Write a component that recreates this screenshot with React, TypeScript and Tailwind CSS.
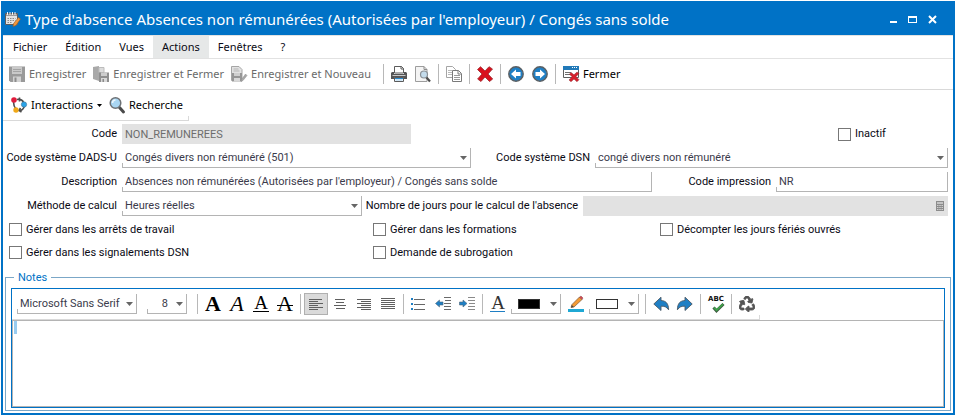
import { ReactNode, useState } from "react";
import { FaRecycle } from "react-icons/fa";
import clsx from "clsx";

type IconProps = { children: ReactNode };

function Icon({ children }: IconProps) {
  return (
    <svg width="16" height="16" viewBox="0 0 16 16" fill="none" className="shrink-0 overflow-visible" aria-hidden="true">
      {children}
    </svg>
  );
}

// ---- icons ----

const CalendarIcon = () => (
  <Icon>
    <path d="M.5 2.500h12v11H.5z" fill="#e4e4e4" stroke="#5c5c5c" />
    <path d="M1 3h11v2H1z" fill="#9b9b9b" />
    <path d="M2.500 1v3M5 1v3M7.500 1v3M10 1v3" stroke="#f5f5f5" />
    <path d="M2.500 7.500h8M2.500 9.500h8M2.500 11.500h5" stroke="#8a8a8a" strokeDasharray="1.500 1" />
    <path d="M13.500 6.500l2 1.500-4.500 6.500-3 1 .6-3z" fill="#f0963c" stroke="#8a5a30" strokeWidth=".6" />
  </Icon>
);

const SaveIcon = () => (
  <Icon>
    <path d="M0 .5h16V16H1.500L0 14.500z" fill="#9a9a9a" />
    <path d="M3 .5h10V8H3z" fill="#c9c9c9" />
    <path d="M4 3.500h8M4 5.500h8" stroke="#a4a4a4" />
    <path d="M4 10.500h8V16H4z" fill="#d2d2d2" />
    <path d="M5.500 11.500h2V16h-2z" fill="#8c8c8c" />
  </Icon>
);

const SaveCloseIcon = () => (
  <Icon>
    <path d="M0 1l6-1v15l-6-2z" fill="#a9a9a9" />
    <path d="M6 1.500h5v5H6z" fill="#dcdcdc" stroke="#bcbcbc" />
    <path d="M6 6.500h10V16H6z" fill="#8f8f8f" />
    <path d="M8 6.500h6v3.500H8z" fill="#cdcdcd" />
    <path d="M8 12h6v4H8z" fill="#d8d8d8" />
    <path d="M9.500 13h1.500v3H9.500z" fill="#8a8a8a" />
  </Icon>
);

const SaveNewIcon = () => (
  <Icon>
    <path d="M.5.5h7.500l3 3v11H.5z" fill="#e2e2e2" stroke="#a6a6a6" />
    <path d="M2.500 3h5M2.500 5h6" stroke="#b5b5b5" />
    <path d="M1 7h10v8.500H1z" fill="#969696" />
    <path d="M3 7h6v3H3z" fill="#cfcfcf" />
    <path d="M3 12h6v3.500H3z" fill="#d9d9d9" />
    <path d="M14.500 8l1.500 1.500-4 5-2 1 .5-2z" fill="#a8a8a8" stroke="#8e8e8e" strokeWidth=".5" />
  </Icon>
);

const PrintIcon = () => (
  <Icon>
    <path d="M3.500.5h7l2 2V7h-9z" fill="#fff" stroke="#5b5b5b" />
    <path d="M10 0v3h3" stroke="#5b5b5b" />
    <path d="M1 6h2v2h10V6h2l1 1v6H0V7z" fill="#555" />
    <path d="M1.500 9.500h13" stroke="#c8c8c8" />
    <path d="M3.500 11.500h9v4h-9z" fill="#fff" stroke="#5b5b5b" />
    <path d="M4 12.500h8" stroke="#2a8ccf" />
    <path d="M4.500 14h7" stroke="#9fcbea" />
  </Icon>
);

const PreviewIcon = () => (
  <Icon>
    <path d="M.5.5h8.500l3 3v12H.5z" fill="#f4f4f4" stroke="#9d9d9d" />
    <path d="M9 .5v3h3" stroke="#8d8d8d" />
    <circle cx="9" cy="8.500" r="3.500" fill="#c4dcec" stroke="#8a9096" strokeWidth="1.200" />
    <path d="M11.500 11.500l3.500 4" stroke="#4e4e4e" strokeWidth="2.200" />
  </Icon>
);

const CopyIcon = () => (
  <Icon>
    <path d="M.5.5h6l3 3v8h-9z" fill="#fff" stroke="#a5a5a5" />
    <path d="M2 4.500h4M2 6.500h4M2 8.500h4" stroke="#b9b9b9" />
    <path d="M6.500 4.500h6l3 3v8h-9z" fill="#fff" stroke="#7a7a7a" />
    <path d="M12 4.500v3.500h3" stroke="#7a7a7a" />
    <path d="M8 9.500h6M8 11.500h6M8 13.500h6" stroke="#9a9a9a" />
  </Icon>
);

const DeleteIcon = () => (
  <Icon>
    <path
      d="M3.500.7L8 5l4-4.300L15.500 3 11 8l4.700 5-3.200 2.500L8 11l-4 4.500L.6 13 5 8 .5 3.500z"
      fill="#d9101c"
      stroke="#9d2a2e"
      strokeWidth=".8"
    />
  </Icon>
);

const PrevIcon = () => (
  <Icon>
    <circle cx="8" cy="8" r="7.200" fill="#1f7fc4" stroke="#5a5f63" strokeWidth="1.400" />
    <path d="M3 8l5-4.500V6h4.500v4H8v2.500z" fill="#fff" />
  </Icon>
);

const NextIcon = () => (
  <Icon>
    <circle cx="8" cy="8" r="7.200" fill="#1f7fc4" stroke="#5a5f63" strokeWidth="1.400" />
    <path d="M13 8L8 3.500V6H3.500v4H8v2.500z" fill="#fff" />
  </Icon>
);

const CloseWindowIcon = () => (
  <Icon>
    <path d="M.5 1v10.500h15V1z" fill="#fff" stroke="#5f5f5f" />
    <path d="M0 0h16v4H0z" fill="#2179b8" />
    <path d="M9 1.500h1M11 1.500h1M13 1.500h1" stroke="#fff" />
    <path d="M2 6.500h6M2 8.500h5" stroke="#6f6f6f" />
    <path
      d="M8 6.500l3 2.300 3-2.800 2 1.500-3 3.200 3 3-2 2-3-2.700-3 2.700-2-1.700 3-3.300-2.500-2.500z"
      fill="#d6202c"
      stroke="#8f2a2e"
      strokeWidth=".5"
    />
  </Icon>
);

const InteractionsIcon = () => (
  <Icon>
    <path d="M2.500 5c0 3 .8 5 2.500 7" stroke="#4d4d4d" strokeWidth="1.600" />
    <path d="M6 2.500c3-.5 5 0 6.500 2.500M8.500.5v4M13.500 9c-1 3-3 4.500-5 4.800M10.500 15l-2.500-1.500L9.500 11" stroke="#4d4d4d" strokeWidth="1.600" />
    <circle cx="3" cy="3" r="2.800" fill="#e01b3c" />
    <circle cx="13" cy="7.500" r="2.700" fill="#2aa3e8" stroke="#4a6b80" strokeWidth=".5" />
    <circle cx="5" cy="13" r="2.700" fill="#f0a818" />
  </Icon>
);

const SearchIcon = () => (
  <Icon>
    <path d="M10.500 10.500l4 4.500" stroke="#4a4a4a" strokeWidth="3" strokeLinecap="round" />
    <circle cx="6.500" cy="6" r="5.300" fill="#a9d6f3" stroke="#6e7276" strokeWidth="1.500" />
    <path d="M3.500 6a3 3 0 013-3" stroke="#eef8ff" strokeWidth="1.500" />
  </Icon>
);

const CalculatorIcon = () => (
  <svg width="8" height="10" viewBox="0 0 8 10" aria-hidden="true">
    <path d="M0 0h8v10H0z" fill="#8c8c8c" />
    <path d="M1 1h6v2H1z" fill="#c4c4c4" />
    <path d="M1 4.500h6M1 6.500h6M1 8.500h6" stroke="#d0d0d0" strokeDasharray="1.500 .75" />
  </svg>
);

const BulletsIcon = () => (
  <Icon>
    <path d="M0 2h2v2H0zM0 7h2v2H0zM0 12h2v2H0z" fill="#1f7fc4" />
    <path d="M3 3.500h11M3 8.500h11M3 13.500h11" stroke="#666" />
  </Icon>
);

const OutdentIcon = () => (
  <Icon>
    <path d="M9 1.500h7M10 4.500h6M9 7.500h7M9 10.500h7M9 13.500h7" stroke="#6a6a6a" />
    <path d="M.5 7.500l4-3.500v2H8v3H4.500v2z" fill="#1f7fc4" stroke="#4f6678" strokeWidth=".6" />
  </Icon>
);

const IndentIcon = () => (
  <Icon>
    <path d="M9 1.500h7M9 4.500h7M10 7.500h6M9 10.500h7M9 13.500h7" stroke="#8a8a8a" />
    <path d="M8 7.500L4 4v2H.5v3H4v2z" fill="#1f7fc4" stroke="#4f6678" strokeWidth=".6" />
  </Icon>
);

const PencilIcon = () => (
  <Icon>
    <path d="M3 11.500l1-3L11.500 1 14 3.500 6 11z" fill="#f39a35" stroke="#7d5a3a" strokeWidth=".7" />
    <path d="M11.500 1l1.500-1 2 2-1 1.500z" fill="#e0404a" stroke="#7a5055" strokeWidth=".5" />
    <path d="M3 11.500l.8-2.500 2 2z" fill="#444" />
    <path d="M0 13h16v3H0z" fill="#1fa8d4" />
  </Icon>
);

const UndoIcon = () => (
  <Icon>
    <path
      d="M.8 8L8 1.200v3.300c4.800.2 7.600 3 7.600 9.300-2-3-4.300-3.800-7.600-3.600v4.300z"
      fill="#1f7fc4"
      stroke="#4d5a66"
      strokeWidth=".9"
    />
  </Icon>
);

const RedoIcon = () => (
  <Icon>
    <path
      d="M15.200 8L8 1.200v3.300C3.200 4.700.4 7.500.4 13.800c2-3 4.300-3.800 7.600-3.600v4.300z"
      fill="#1f7fc4"
      stroke="#4d5a66"
      strokeWidth=".9"
    />
  </Icon>
);

const SpellIcon = () => (
  <Icon>
    <text x="0" y="5" className="font-['DejaVu_Sans',sans-serif] text-[7px] font-bold" fill="#111">
      ABC
    </text>
    <path d="M5.500 11.500l3 3.300L15.500 8" stroke="#3d5a40" strokeWidth="3" />
    <path d="M6 11.500l2.500 2.700L15 8.200" stroke="#3fa34a" strokeWidth="1.800" />
  </Icon>
);

const ALIGN_LINES = {
  left: "M1 3.500h13M1 5.500h9M1 7.500h14M1 9.500h9M1 11.500h14M1 13.500h9",
  center: "M3 3.500h10M4 6.500h8M2 9.500h12M4 12.500h9",
  right: "M1 3.500h14M5 5.500h10M1 7.500h14M5 9.500h10M1 11.500h14M5 13.500h10",
  justify: "M1 2.500h14M1 4.500h14M1 6.500h14M1 8.500h14M1 10.500h14M1 12.500h14",
};

type Align = keyof typeof ALIGN_LINES;

const AlignIcon = ({ align }: { align: Align }) => (
  <Icon>
    <path d={ALIGN_LINES[align]} stroke="#5f5f5f" />
  </Icon>
);

type LetterStyle = "bold" | "italic" | "underline" | "strike" | "color";

const LetterIcon = ({ kind }: { kind: LetterStyle }) => (
  <Icon>
    <text
      x="8"
      y={kind === "underline" || kind === "color" ? 13 : 15}
      textAnchor="middle"
      fill={kind === "color" ? "#333" : "#000"}
      className={clsx(
        "font-['Liberation_Serif',serif]",
        kind === "underline" || kind === "color" ? "text-[19px]" : "text-[22px]",
        kind === "bold" && "font-bold",
        kind === "italic" && "italic"
      )}
    >
      A
    </text>
    {kind === "underline" && <path d="M0 15.500h16" stroke="#000" />}
    {kind === "color" && <path d="M0 15.500h15" stroke="#1f7fc4" />}
    {kind === "strike" && <path d="M0 9.500h16" stroke="#000" />}
  </Icon>
);

// ---- controls ----

type ToolButtonProps = {
  icon?: ReactNode;
  label?: string;
  title?: string;
  disabled?: boolean;
  active?: boolean;
  dropdown?: boolean;
  onClick?: () => void;
};

function ToolButton({ icon, label, title, disabled, active, dropdown, onClick }: ToolButtonProps) {
  return (
    <button
      type="button"
      disabled={disabled}
      aria-label={label ? undefined : title}
      onClick={onClick}
      className={clsx(
        "flex h-[22px] shrink-0 items-center gap-1 whitespace-nowrap font-['Noto_Sans',sans-serif] text-[11px]",
        active ? "border border-[#b0b0b0] bg-[#dadada] px-[3px]" : label ? "pr-[3px] pl-1" : "px-1",
        disabled ? "text-[#6a6a6a]" : "text-black"
      )}
    >
      {icon}
      {label}
      {dropdown && (
        <svg width="5" height="3" viewBox="0 0 5 3" className="shrink-0" aria-hidden="true">
          <path d="M0 0h5L2.500 3z" fill="#000" />
        </svg>
      )}
    </button>
  );
}

const Caret = () => (
  <svg
    width="7"
    height="4"
    viewBox="0 0 7 4"
    className="pointer-events-none absolute right-[3px] shrink-0"
    aria-hidden="true"
  >
    <path d="M0 0h7L3.500 4z" fill="#666" />
  </svg>
);

const Separator = () => <span className="mx-[3px] h-5 w-px shrink-0 bg-[#b8b8b8]" />;

const FIELD_BOX =
  "relative flex h-5 min-w-0 items-center border-r border-b border-[#b4b4b4] before:absolute before:bottom-0 before:left-0 before:h-1 before:w-px before:bg-[#b4b4b4]";

type SelectProps = {
  id: string;
  options: string[];
  title?: string;
  className?: string;
  right?: boolean;
};

function SelectBox({ id, options, title, className, right }: SelectProps) {
  return (
    <div className={clsx(FIELD_BOX, className)}>
      <select
        id={id}
        aria-label={title}
        className={clsx(
          "h-full w-full appearance-none bg-transparent pl-[3px] text-[#3b3b4b] outline-none",
          right ? "pr-[18px] text-right" : "pr-3"
        )}
      >
        {options.map((o) => (
          <option key={o}>{o}</option>
        ))}
      </select>
      <Caret />
    </div>
  );
}

function TextBox({ id, value }: { id: string; value: string }) {
  return (
    <div className={FIELD_BOX}>
      <input id={id} defaultValue={value} className="h-full w-full px-[3px] text-[#3b3b4b] outline-none" />
    </div>
  );
}

function FieldLabel({ htmlFor, children }: { htmlFor: string; children: ReactNode }) {
  return (
    <label htmlFor={htmlFor} className="flex justify-end whitespace-nowrap">
      {children}
    </label>
  );
}

function CheckField({ label }: { label: string }) {
  return (
    <label className="flex items-center gap-1 whitespace-nowrap">
      <input
        type="checkbox"
        className="size-[13px] shrink-0 appearance-none border border-[#777] bg-white checked:bg-[#0072c6]"
      />
      {label}
    </label>
  );
}

function ColorPicker({ title, swatch }: { title: string; swatch: string }) {
  return (
    <button
      type="button"
      aria-label={title}
      aria-haspopup="true"
      className={clsx(FIELD_BOX, "ml-px w-[50px] shrink-0 pl-[7px]")}
    >
      <span className={clsx("h-[10px] w-[22px] border border-[#333]", swatch)} />
      <Caret />
    </button>
  );
}

// ---- sections ----

const MENUS = ["Fichier", "Édition", "Vues", "Actions", "Fenêtres", "?"];

function TitleBar() {
  return (
    <header className="flex h-8 items-center justify-between bg-[#0072c6] pr-4 pl-0.5 text-white">
      <div className="flex items-center gap-1">
        <CalendarIcon />
        <h1 className="font-['Noto_Sans',sans-serif] text-[15px] whitespace-nowrap">
          Type d'absence Absences non rémunérées (Autorisées par l'employeur) / Congés sans solde
        </h1>
      </div>
      <div className="flex items-center gap-[11px]">
        <button type="button" aria-label="Réduire">
          <svg width="7" height="9" viewBox="0 0 7 9">
            <path d="M0 6h7v2H0z" fill="#fff" />
          </svg>
        </button>
        <button type="button" aria-label="Agrandir">
          <svg width="9" height="9" viewBox="0 0 9 9">
            <path d="M0 1h9v7H0zM1 3v4h7V3z" fill="#fff" fillRule="evenodd" />
          </svg>
        </button>
        <button type="button" aria-label="Fermer la fenêtre">
          <svg width="9" height="9" viewBox="0 0 9 9">
            <path d="M1 1l7 7M8 1L1 8" stroke="#fff" strokeWidth="2" />
          </svg>
        </button>
      </div>
    </header>
  );
}

function MenuBar() {
  return (
    <nav className="flex h-6 border-t border-b border-[#e2e2e2] px-px">
      {MENUS.map((m) => (
        <button
          key={m}
          type="button"
          className={clsx("px-[9px] font-['Noto_Sans',sans-serif] text-[11px]", m === "Actions" && "bg-[#e6e8e8]")}
        >
          {m}
        </button>
      ))}
    </nav>
  );
}

function MainToolbar() {
  return (
    <div className="flex h-[31px] items-center border-b border-[#d9d9d9] px-0.5">
      <ToolButton icon={<SaveIcon />} label="Enregistrer" disabled />
      <ToolButton icon={<SaveCloseIcon />} label="Enregistrer et Fermer" disabled />
      <ToolButton icon={<SaveNewIcon />} label="Enregistrer et Nouveau" disabled />
      <span className="w-1.5" />
      <Separator />
      <ToolButton icon={<PrintIcon />} title="Imprimer" />
      <ToolButton icon={<PreviewIcon />} title="Aperçu" />
      <Separator />
      <ToolButton icon={<CopyIcon />} title="Copier" />
      <Separator />
      <ToolButton icon={<DeleteIcon />} title="Supprimer" />
      <Separator />
      <ToolButton icon={<PrevIcon />} title="Précédent" />
      <ToolButton icon={<NextIcon />} title="Suivant" />
      <Separator />
      <ToolButton icon={<CloseWindowIcon />} label="Fermer" />
    </div>
  );
}

function SearchToolbar() {
  return (
    <div className="relative flex h-[31px] w-fit items-center border-b border-[#d9d9d9] pr-[3px] pl-1 after:absolute after:right-0 after:bottom-0 after:h-1 after:w-px after:bg-[#d9d9d9]">
      <ToolButton icon={<InteractionsIcon />} label="Interactions" dropdown />
      <ToolButton icon={<SearchIcon />} label="Recherche" />
    </div>
  );
}

function AbsenceForm() {
  return (
    <form className="flex flex-col gap-1 pt-[3px] pr-[5px]">
      <div className="grid h-5 grid-cols-[114px_289fr_417fr_110px] items-center gap-[5px]">
        <FieldLabel htmlFor="code">Code</FieldLabel>
        <input
          id="code"
          disabled
          defaultValue="NON_REMUNEREES"
          className="h-5 w-full min-w-0 bg-[#e2e2e2] px-[3px] text-[#6d6d6d]"
        />
        <span />
        <CheckField label="Inactif" />
      </div>
      <div className="grid grid-cols-[114px_349fr_114px_353fr] items-center gap-[5px]">
        <FieldLabel htmlFor="dads">Code système DADS-U</FieldLabel>
        <SelectBox id="dads" options={["Congés divers non rémunéré (501)"]} />
        <FieldLabel htmlFor="dsn">Code système DSN</FieldLabel>
        <SelectBox id="dsn" options={["congé divers non rémunéré"]} />
      </div>
      <div className="grid grid-cols-[114px_530fr_114px_172fr] items-center gap-[5px]">
        <FieldLabel htmlFor="description">Description</FieldLabel>
        <TextBox id="description" value="Absences non rémunérées (Autorisées par l'employeur) / Congés sans solde" />
        <FieldLabel htmlFor="impression">Code impression</FieldLabel>
        <TextBox id="impression" value="NR" />
      </div>
      <div className="grid grid-cols-[114px_240fr_211px_365fr] items-center gap-[5px]">
        <FieldLabel htmlFor="methode">Méthode de calcul</FieldLabel>
        <SelectBox id="methode" options={["Heures réelles"]} />
        <FieldLabel htmlFor="jours">Nombre de jours pour le calcul de l'absence</FieldLabel>
        <div className="flex h-5 min-w-0 items-center bg-[#e2e2e2] pr-1">
          <input id="jours" disabled className="h-full min-w-0 flex-1 px-[3px]" />
          <CalculatorIcon />
        </div>
      </div>
      <div className="grid auto-rows-[19px] grid-cols-[364fr_287fr_288fr] gap-y-1 pl-1.5">
        <CheckField label="Gérer dans les arrêts de travail" />
        <CheckField label="Gérer dans les formations" />
        <CheckField label="Décompter les jours fériés ouvrés" />
        <CheckField label="Gérer dans les signalements DSN" />
        <CheckField label="Demande de subrogation" />
      </div>
    </form>
  );
}

const ALIGNS: { value: Align; title: string }[] = [
  { value: "left", title: "Aligner à gauche" },
  { value: "center", title: "Centrer" },
  { value: "right", title: "Aligner à droite" },
  { value: "justify", title: "Justifier" },
];

function NotesEditor() {
  const [align, setAlign] = useState<Align>("left");

  return (
    <fieldset className="mx-0.5 mt-2 mb-0.5 flex min-w-0 flex-1 flex-col border border-[#7ba7c7] px-[5px] pt-[3px] pb-0.5">
      <legend className="ml-[3px] h-[15px] px-1 leading-[15px] text-[#0072c6]">Notes</legend>
      <div className="flex flex-1 flex-col border border-[#0072c6]">
        <div className="relative flex h-[31px] w-fit items-center border-b border-[#d9d9d9] pr-[1px] pl-[5px] after:absolute after:right-0 after:bottom-0 after:h-1 after:w-px after:bg-[#d9d9d9]">
          <SelectBox id="police" title="Police" options={["Microsoft Sans Serif"]} className="w-[120px] shrink-0" />
          <span className="w-[10px]" />
          <SelectBox id="taille" title="Taille" options={["8"]} className="w-10 shrink-0" right />
          <span className="w-[7px]" />
          <Separator />
          <ToolButton icon={<LetterIcon kind="bold" />} title="Gras" />
          <ToolButton icon={<LetterIcon kind="italic" />} title="Italique" />
          <ToolButton icon={<LetterIcon kind="underline" />} title="Souligné" />
          <ToolButton icon={<LetterIcon kind="strike" />} title="Barré" />
          <Separator />
          {ALIGNS.map((a) => (
            <ToolButton
              key={a.value}
              icon={<AlignIcon align={a.value} />}
              title={a.title}
              active={align === a.value}
              onClick={() => setAlign(a.value)}
            />
          ))}
          <Separator />
          <ToolButton icon={<BulletsIcon />} title="Puces" />
          <ToolButton icon={<OutdentIcon />} title="Diminuer le retrait" />
          <ToolButton icon={<IndentIcon />} title="Augmenter le retrait" />
          <Separator />
          <ToolButton icon={<LetterIcon kind="color" />} title="Couleur du texte" />
          <ColorPicker title="Choisir la couleur du texte" swatch="bg-black" />
          <span className="w-[3px]" />
          <ToolButton icon={<PencilIcon />} title="Surlignage" />
          <ColorPicker title="Choisir la couleur de surlignage" swatch="bg-white" />
          <span className="w-[3px]" />
          <Separator />
          <ToolButton icon={<UndoIcon />} title="Annuler" />
          <ToolButton icon={<RedoIcon />} title="Rétablir" />
          <Separator />
          <ToolButton icon={<SpellIcon />} title="Orthographe" />
          <Separator />
          <ToolButton icon={<FaRecycle size={16} color="#555" stroke="#555" strokeWidth={28} />} title="Vider" />
        </div>
        <div className="flex flex-1 border border-[#b4b4b4]">
          <span className="ml-px h-[13px] w-[3px] bg-[#99ccf0]" />
          <textarea aria-label="Notes" className="min-h-[60px] w-full flex-1 resize-none outline-none" />
        </div>
      </div>
    </fieldset>
  );
}

export default function App() {
  return (
    <div className="flex min-h-screen bg-white p-px font-['Roboto',sans-serif] text-[11px] leading-4 text-[#0a0a14]">
      <main className="flex min-w-0 flex-1 flex-col border-2 border-[#0072c6] bg-white">
        <TitleBar />
        <MenuBar />
        <MainToolbar />
        <SearchToolbar />
        <AbsenceForm />
        <NotesEditor />
      </main>
    </div>
  );
}
